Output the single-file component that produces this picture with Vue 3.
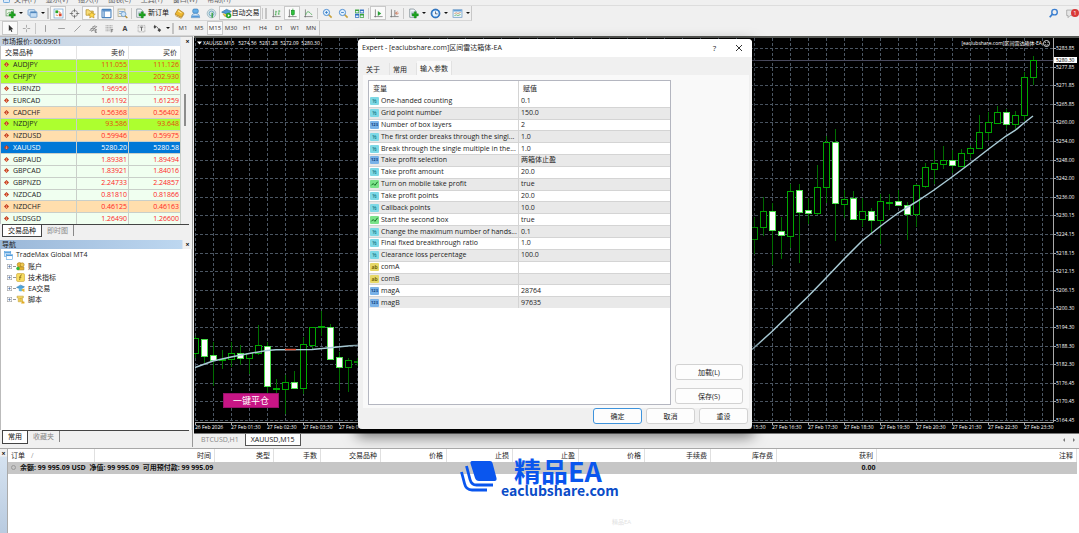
<script setup>
const menus = ['文件(F)', '显示(V)', '插入(I)', '图表(C)', '工具(T)', '窗口(W)', '帮助(H)']

const plus = '<path d="M9 5.5h3v3h3v3h-3v3h-3v-3H6v-3h3z" fill="#1fa51f" stroke="#0b7a14" stroke-width=".6"/>'
const chartBox = '<rect x="1.5" y="2.5" width="11" height="9" fill="#eef6ea" stroke="#5b8f5b"/><path d="M3 9l3-3 2 1 3-3" fill="none" stroke="#4d9a4d"/>'
const page = '<path d="M2.5 1.5h6l3 3v9h-9z" fill="#f4f7fa" stroke="#6d7d86"/><path d="M4.500 6h5M4.500 8h4M4.500 10h4" stroke="#7e98a8"/>'
const glass = '<path d="M9.500 9.500l4.500 4.500" stroke="#c9a13a" stroke-width="2.400"/><circle cx="6.500" cy="6.500" r="4.500" fill="#e3f1fd" stroke="#4b8bd0" stroke-width="1.400"/>'
const axes = '<path d="M3.500 2v11.500M1.500 12.500H14" fill="none" stroke="#666"/>'

const icons = {
  newChart: chartBox + plus,
  windows: '<rect x="1.500" y="2.500" width="10" height="8" rx="1" fill="#dcebf9" stroke="#4f86bd"/><rect x="4.500" y="5.500" width="10" height="8" rx="1" fill="#c3dcf4" stroke="#4f86bd"/><path d="M5 6.500h9" stroke="#4f86bd" stroke-width="2"/>',
  watch: '<rect x="1.500" y="1.500" width="13" height="13" fill="#fff" stroke="#6aa0cf"/><rect x="3.500" y="3.500" width="4" height="4" fill="#28a428"/><rect x="8.500" y="8" width="4" height="4" fill="#d8452c"/><path d="M8 5l3 2M4 10l3 1" stroke="#e08a48" stroke-width="1.500"/>',
  cross: '<circle cx="8" cy="8" r="4.500" fill="none" stroke="#666"/><path d="M8 1v5M8 10v5M1 8h5M10 8h5" stroke="#555"/>',
  favorites: '<path d="M1.500 2.500h4l1.500 2h5v6h-10.500z" fill="#f7dc78" stroke="#b18a22"/><path d="M10 5.500l1.500 3 3.500.4-2.500 2.200.7 3.400-3.200-1.700-3.200 1.700.7-3.400L5 8.900l3.500-.4z" fill="#ffd94a" stroke="#b08312" stroke-width=".8"/>',
  terminal: '<rect x="1.500" y="2" width="13" height="12" rx="1" fill="#fff" stroke="#4b83bd" stroke-width="1.600"/><path d="M2 4h12M4.500 4v9" stroke="#5f94cb" stroke-width="2"/>',
  tester: '<rect x="1.500" y="1.500" width="10" height="11" fill="#f4f0e2" stroke="#a39b7d"/><path d="M3 5h7M3 8h3" stroke="#4c8ed5"/><circle cx="9.500" cy="9" r="3.500" fill="#cfe6fa" stroke="#568fc8"/><path d="M12 11.500l3 3" stroke="#b98f34" stroke-width="2"/>',
  order: page + plus,
  tag: '<path d="M6 1.500l8.500 6-4 6L1.500 9z" fill="#edb72e" stroke="#a87412"/><path d="M2 11l8.500 4 4-6" fill="none" stroke="#b98518"/><path d="M6 4l5 3.500" stroke="#ffe9a3" stroke-width="1.500"/>',
  person: '<rect x="4" y="1.500" width="8" height="6" rx="2" fill="#65aee8" stroke="#397eb9"/><path d="M2 14c0-4 2-6 6-6s6 2 6 6z" fill="#dceaf5" stroke="#4584bf"/><path d="M3 12h10" stroke="#4b94da" stroke-width="2"/>',
  signal: '<circle cx="8" cy="8" r="6.300" fill="#d8e5e8" stroke="#8aabb8"/><circle cx="8" cy="8" r="3.500" fill="none" stroke="#4a93b8"/><path d="M8 7h2v7H8z" fill="#34a13c"/>',
  auto: '<path d="M1 6l7-4 7 3-6 4z" fill="#4d9ad5" stroke="#2a6da5"/><path d="M3 8c1 5 6 6 9 2" fill="#f0c94c" stroke="#a98322"/><circle cx="11" cy="11" r="4" fill="#25a52e"/><path d="M10 9l3 2-3 2z" fill="#fff"/>',
  bars: axes + '<path d="M7 4v7M5.500 9.500h1.500M7 5.500h2M11.500 3v7M10 8.500h1.500M11.500 4.500h2" stroke="#2ba038" fill="none"/>',
  candles: axes + '<path d="M8.500 1v11" stroke="#168f24"/><rect x="6.500" y="3.500" width="4" height="6" fill="#2fc53c" stroke="#168f24"/>',
  line: axes + '<path d="M4 10c2-7 5-5 9 0" stroke="#2ba038" fill="none"/>',
  zoomIn: glass + '<path d="M6.500 4.500v4M4.500 6.500h4" stroke="#2f78c4" stroke-width="1.200"/>',
  zoomOut: glass + '<path d="M4.500 6.500h4" stroke="#2f78c4" stroke-width="1.200"/>',
  tile: '<path d="M1.500 2h6v5.500h-6zM8.500 8.500h6V14h-6z" fill="#3aa33c"/><path d="M8.500 2h6v5.500h-6zM1.500 8.500h6V14h-6z" fill="#2e6fc4"/><path d="M2.500 4.500h4v2h-4zM9.500 4.500h4v2h-4zM2.500 11h4v2h-4zM9.500 11h4v2h-4z" fill="#e8f2fa"/>',
  scroll: axes + '<path d="M7 4.500l5 3.500-5 3.500z" fill="#2ba038"/>',
  shift: axes + '<path d="M8.500 3v9" stroke="#555"/><path d="M14 7.500h-4M12 5l-2.500 2.500L12 10" stroke="#c4532c" fill="none"/>',
  clock: '<circle cx="8" cy="8" r="6.500" fill="#2f7fd3" stroke="#1b5ca6"/><circle cx="8" cy="8" r="4.500" fill="#e9f4fd"/><path d="M8 5v3.500h3" stroke="#235" fill="none"/>',
  template: '<rect x="1.500" y="2.500" width="13" height="11" fill="#eef6fc" stroke="#5b90c2"/><path d="M2 4h12" stroke="#5b9ad5" stroke-width="2"/><path d="M3.500 8l3-1 2 1 4-1.500" stroke="#c5703c" fill="none"/><path d="M3.500 11l3-1 2 1 4-1.500" stroke="#3fa24a" fill="none"/>',
  cursor: '<path d="M5 1.500v11l2.700-2.500 1.800 4 1.800-.8-1.800-3.800H13z" fill="#333"/>',
  plusLine: '<path d="M8 1.500v5M8 9.500v5M1.500 8h5M9.500 8h5" stroke="#777"/>',
  vline: '<path d="M8 2v12" stroke="#777" stroke-width="1.200"/>',
  hline: '<path d="M2 8h12" stroke="#777" stroke-width="1.200"/>',
  diag: '<path d="M2.500 13.500l11-11" stroke="#777" stroke-width="1.200"/>',
  channel: '<path d="M1 12L11 2M4 14L14 4M3 8h8M2 11h8M6 5h8" stroke="#666"/><path d="M11 10v5h3M11 12.500h2.500M11 10h3" stroke="#444" fill="none"/>',
  fibo: '<path d="M1 3h13M1 6h13M1 9h13M1 12h8" stroke="#777" stroke-dasharray="2 .6"/><path d="M11 15v-5h3.500M11 12.500h3" stroke="#444" fill="none"/>',
  textBox: '<rect x="2" y="2.500" width="12" height="11.500" fill="none" stroke="#777" stroke-dasharray="1.500 1"/><path d="M5 5.500h6M8 5.500v6.500" stroke="#555" stroke-width="1.500"/>',
  arrows: '<path d="M3 1.500l3 4-3 3-2-3z" fill="#444"/><path d="M6 4l5 6" stroke="#555" stroke-width="1.500"/><path d="M11 7.500l3.500 3-3 3.500-3.500-3z" fill="#444"/>',
}

const mainBar = [
  { icon: 'newChart', label: '新图表' }, { drop: 1 }, { icon: 'windows', label: '图表配置' }, { drop: 1 }, { handle: 1 },
  { icon: 'watch', label: '市场报价', on: 1 }, { icon: 'cross', label: '数据窗口' }, { icon: 'favorites', label: '导航', on: 1 },
  { icon: 'terminal', label: '终端', on: 1 }, { icon: 'tester', label: '策略测试' }, { sep: 1 },
  { icon: 'order', label: '新订单', text: '新订单' }, { icon: 'tag', label: 'MetaEditor' }, { icon: 'person', label: '社区' },
  { icon: 'signal', label: '信号' }, { icon: 'auto', label: '自动交易', text: '自动交易', on: 1 }, { sep: 1 }, { handle: 1 },
  { icon: 'bars', label: '柱状图' }, { icon: 'candles', label: '阴阳烛', on: 1 }, { icon: 'line', label: '折线图' }, { sep: 1 },
  { icon: 'zoomIn', label: '放大' }, { icon: 'zoomOut', label: '缩小' }, { icon: 'tile', label: '平铺窗口' }, { sep: 1 },
  { icon: 'scroll', label: '自动滚动', on: 1 }, { icon: 'shift', label: '图表平移' }, { sep: 1 },
  { icon: 'order', label: '技术指标' }, { drop: 1 }, { icon: 'clock', label: '时间周期' }, { drop: 1 }, { icon: 'template', label: '模板' }, { drop: 1 },
]
const drawBar = [
  { icon: 'cursor', label: '光标', on: 1 }, { icon: 'plusLine', label: '十字准线' }, { sep: 1 }, { icon: 'vline', label: '垂直线' },
  { icon: 'hline', label: '水平线' }, { icon: 'diag', label: '趋势线' }, { icon: 'channel', label: '等距通道' }, { icon: 'fibo', label: '斐波那契' },
  { letter: 'A' }, { icon: 'textBox', label: '文字标签' }, { icon: 'arrows', label: '箭头' }, { drop: 1 }, { handle: 1 },
  ...['M1', 'M5', 'M15', 'M30', 'H1', 'H4', 'D1', 'W1', 'MN'].map(p => ({ period: p, on: p === 'M15' })),
]

const quotes = [
  ['AUDJPY', '111.055', '111.126', 'lime'], ['CHFJPY', '202.828', '202.930', 'lime'],
  ['EURNZD', '1.96956', '1.97054', ''], ['EURCAD', '1.61192', '1.61259', ''],
  ['CADCHF', '0.56368', '0.56402', 'peach'], ['NZDJPY', '93.586', '93.648', 'lime'],
  ['NZDUSD', '0.59946', '0.59975', 'peach'], ['XAUUSD', '5280.20', '5280.58', 'picked'],
  ['GBPAUD', '1.89381', '1.89494', ''], ['GBPCAD', '1.83921', '1.84016', ''],
  ['GBPNZD', '2.24733', '2.24857', ''], ['NZDCAD', '0.81810', '0.81866', ''],
  ['NZDCHF', '0.46125', '0.46163', 'peach'], ['USDSGD', '1.26490', '1.26600', ''],
]

const tree = [
  { name: '账户', svg: '<circle cx="6" cy="5" r="4" fill="#e8b934" stroke="#a57a12"/><circle cx="11" cy="5" r="3.500" fill="#f0cb55" stroke="#a57a12"/><path d="M3 14V9h11v5z" fill="#e5b32e" stroke="#a57a12"/><circle cx="3.500" cy="11.500" r="3" fill="#2fb53a"/>' },
  { name: '技术指标', svg: '<rect x="1" y="1" width="14" height="14" rx="2" fill="#f7dd63" stroke="#c29a25"/><path d="M10.500 3.500c-3-.5-3 2-4 9M5.500 7.500h4" stroke="#7a5c10" fill="none" stroke-width="1.300"/>' },
  { name: 'EA交易', svg: '<path d="M1 6l7-4 7 3-6 4z" fill="#4da3da" stroke="#2a78ad"/><path d="M5 8v4c3 2 6 1 8-1l-3-4" fill="#5db5e3"/><path d="M9 10l6-2v6l-3-1z" fill="#e8b830"/>' },
  { name: '脚本', svg: '<path d="M2 2h11v3h-2l1 7h-8V5H2z" fill="#f6d961" stroke="#bb962a"/><path d="M6 6h4M6 9h4" stroke="#b58d22"/><path d="M9 15l2-4 4 1v3z" fill="#e2aa22"/>' },
]

const params = [
  ['d', 'One-handed counting', '0.1'], ['d', 'Grid point number', '150.0'], ['i', 'Number of box layers', '2'],
  ['d', 'The first order breaks through the singl...', '1.0'], ['d', 'Break through the single multiple in the...', '1.0'],
  ['i', 'Take profit selection', '两箱体止盈'], ['d', 'Take profit amount', '20.0'], ['b', 'Turn on mobile take profit', 'true'],
  ['d', 'Take profit points', '20.0'], ['d', 'Callback points', '10.0'], ['b', 'Start the second box', 'true'],
  ['d', 'Change the maximum number of hands...', '0.1'], ['d', 'Final fixed breakthrough ratio', '1.0'],
  ['d', 'Clearance loss percentage', '100.0'], ['s', 'comA', ''], ['s', 'comB', ''], ['i', 'magA', '28764'], ['i', 'magB', '97635'],
]
const badge = { d: '½', i: '123', b: '', s: 'ab' }

const prices = ['5283.85', '5277.85', '5271.85', '5265.85', '5260.00', '5254.00', '5248.00', '5242.00', '5236.00', '5230.15', '5224.15',
  '5218.15', '5212.15', '5206.15', '5200.30', '5194.30', '5188.30', '5182.30', '5176.45', '5170.45', '5164.45']
  .map((t, i) => ({ t, y: Math.round(48 + 18.6 * i) }))
const grid = Array.from({ length: 48 }, (_, i) => Math.round(195 + 18.02 * i))
const times = Array.from({ length: 24 }, (_, n) => ({
  x: Math.round(195 + 36.04 * n),
  t: n ? `27 Feb ${String(n).padStart(2, '0')}:30` : '26 Feb 2026',
}))

// [slot, high, bodyTop, bodyBottom, low, falling]
const candles = [
  [0, 336, 338, 353, 358, 0], [1, 339, 339, 356, 363, 1], [2, 342, 355, 360, 386, 1], [3, 350, 359, 359, 369, 0],
  [4, 342, 353, 359, 367, 0], [5, 345, 353, 358, 365, 1], [6, 353, 353, 358, 374, 0], [7, 325, 345, 353, 355, 0],
  [8, 342, 346, 386, 394, 1], [9, 379, 388, 388, 394, 0], [10, 375, 382, 389, 414, 0], [11, 371, 382, 388, 388, 1],
  [12, 337, 344, 388, 394, 0], [13, 327, 327, 345, 350, 0], [14, 311, 326, 326, 336, 0], [15, 324, 327, 359, 360, 1],
  [16, 352, 357, 367, 390, 1], [17, 358, 360, 367, 392, 0], [18, 358, 361, 361, 366, 0],
  [62, 217, 227, 239, 254, 0], [63, 197, 211, 227, 236, 0], [64, 203, 211, 230, 265, 1], [65, 217, 231, 235, 259, 1],
  [66, 184, 191, 236, 248, 0], [67, 184, 190, 212, 263, 1], [68, 198, 210, 213, 224, 1], [69, 165, 187, 213, 215, 0],
  [70, 136, 142, 187, 203, 0], [71, 129, 142, 203, 241, 1], [72, 190, 199, 204, 218, 0], [73, 191, 198, 219, 219, 1],
  [74, 198, 211, 219, 227, 0], [75, 208, 211, 220, 233, 1], [76, 194, 201, 220, 244, 0], [77, 194, 202, 202, 210, 0],
  [78, 190, 201, 205, 205, 1], [79, 202, 205, 214, 240, 1], [80, 184, 185, 214, 227, 0], [81, 163, 167, 186, 188, 0],
  [82, 150, 163, 169, 184, 0], [83, 146, 160, 164, 169, 0], [84, 150, 160, 165, 173, 1], [85, 149, 153, 166, 167, 0],
  [86, 146, 148, 153, 158, 0], [87, 115, 132, 148, 149, 0], [88, 112, 122, 132, 140, 0], [89, 106, 112, 123, 123, 0],
  [90, 109, 112, 124, 129, 1], [91, 111, 115, 124, 129, 0], [92, 72, 77, 115, 121, 0], [93, 56, 60, 77, 85, 0],
].map(([k, hi, top, bot, lo, down]) => ({ x: Math.round(195 + 9.01 * k), hi, top, h: Math.max(bot - top, 1), lo, down }))

const orderCols = [
  ['订单', 'c1'], ['时间', 'c2'], ['类型', 'c3'], ['手数', 'c4'], ['交易品种', 'c5'], ['价格', 'c6'], ['止损', 'c6'], ['止盈', 'c6'],
  ['价格', 'c6'], ['手续费', 'c6'], ['库存费', 'c6'], ['获利', 'c7'], ['注释', 'c8'],
]
</script>

<template>
  <div class="app">
    <nav class="menu">
      <svg class="app-icon" viewBox="0 0 16 16"><rect x="1" y="1" width="14" height="14" rx="2" fill="#dbeafa" stroke="#5c9bd8" stroke-width="2" /></svg>
      <a v-for="m in menus" :key="m" href="#">{{ m }}</a>
    </nav>

    <div class="bars">
      <div class="bar-left">
        <div v-for="(bar, b) in [mainBar, drawBar]" :key="b" class="toolbar" :class="{ low: b === 1 }">
          <template v-for="(t, i) in bar" :key="i">
            <i v-if="t.drop" class="drop"></i>
            <i v-else-if="t.handle" class="handle"></i>
            <i v-else-if="t.sep" class="sep"></i>
            <button v-else class="tool" :class="{ on: t.on, wide: t.text }" :aria-label="t.label">
              <svg v-if="t.icon" viewBox="0 0 16 16" v-html="icons[t.icon]"></svg>
              <span v-if="t.text">{{ t.text }}</span>
              <b v-if="t.letter">{{ t.letter }}</b>
              <small v-if="t.period">{{ t.period }}</small>
            </button>
          </template>
        </div>
      </div>
      <div class="bar-right">
        <button class="tool" aria-label="搜索"><svg viewBox="0 0 16 16"><circle cx="9.500" cy="6" r="4" fill="none" stroke="#3b7fd0" stroke-width="2" /><path d="M6.500 9l-4 4.500" stroke="#3b7fd0" stroke-width="2.500" /></svg></button>
        <button class="tool note" aria-label="通知"><svg viewBox="0 0 16 16"><path d="M1 3h12v8H6l-3 3v-3H1z" fill="#e6e6e6" stroke="#999" /></svg><em>1</em></button>
      </div>
    </div>

    <main class="work">
      <aside class="side">
        <section class="watch">
          <h2 class="cap">市场报价: 06:09:01<button aria-label="关闭">×</button></h2>
          <div class="quote-box">
            <table class="quotes">
              <thead><tr><th>交易品种</th><th>卖价</th><th>买价</th></tr></thead>
              <tbody>
                <tr v-for="q in quotes" :key="q[0]" :class="q[3]">
                  <td><svg viewBox="0 0 8 8"><path d="M4 0l4 4-4 4-4-4z" fill="#c23a1c" /><path d="M4 2v4M2.500 4.500L4 6l1.500-1.500" stroke="#ffb48c" fill="none" /></svg>{{ q[0] }}</td>
                  <td>{{ q[1] }}</td><td>{{ q[2] }}</td>
                </tr>
              </tbody>
            </table>
            <i class="thumb"></i>
          </div>
          <div class="tabs"><button class="cur">交易品种</button><button>即时图</button></div>
        </section>
        <section class="navi">
          <h2 class="cap blue">导航<button aria-label="关闭">×</button></h2>
          <div class="tree">
            <p class="root"><svg viewBox="0 0 16 16"><rect x="1" y="1" width="11" height="9" fill="#d9ecfb" stroke="#4c9adb" /><path d="M1 3h11" stroke="#4c9adb" stroke-width="2" /><rect x="4" y="6" width="11" height="9" fill="#fff" stroke="#4c9adb" /><path d="M4 8h11" stroke="#4c9adb" stroke-width="2" /></svg>TradeMax Global MT4</p>
            <p v-for="n in tree" :key="n.name">
              <svg class="exp" viewBox="0 0 9 9"><rect x=".5" y=".5" width="8" height="8" fill="#fff" stroke="#999" /><path d="M2 4.500h5M4.500 2v5" stroke="#3b5f9b" /></svg><i></i><svg viewBox="0 0 16 16" v-html="n.svg"></svg>{{ n.name }}
            </p>
          </div>
          <div class="tabs"><button class="cur">常用</button><button>收藏夹</button></div>
        </section>
      </aside>

      <div class="stage">
        <svg class="chart" viewBox="194 36 885 397">
          <rect x="194" y="36" width="885" height="397" fill="#000" />
          <rect x="194" y="36" width="885" height="2" fill="#555753" />
          <g stroke="#4b5663" stroke-dasharray="3 2">
            <path v-for="p in prices" :key="p.t" :d="`M195 ${p.y + .5}H1053`" />
            <path v-for="x in grid" :key="x" :d="`M${x + .5} 38V422`" />
          </g>
          <path d="M195 60.500H1053" stroke="#4a4a5e" />
          <g v-for="c in candles" :key="c.x">
            <path :d="`M${c.x + .5} ${c.hi}V${c.lo}`" stroke="#006e00" />
            <rect :x="c.x - 2.500" :y="c.top + .5" width="6" :height="c.h" :fill="c.down ? '#fff' : '#000'" :stroke="c.down ? '#4be04b' : '#00a800'" />
          </g>
          <g fill="none" stroke="#a9cbd6" stroke-width="1.500">
            <path d="M195 367.500L213 361 231 357 249 353.500 267 350.500 276 349.700 312 349.500 330 347.700 350 345.700 360 345.300" />
            <path d="M752 349.500L772 331.500 790 314 808 296.500 825 279 844 259 862 241 880 226.500 898 213 916 202 934 190 952 177 970 163.500 988 149.500 1006 136 1015 130.500 1024 123 1033 116" />
            <path d="M285 349.500H296" stroke="#e0553a" />
          </g>
          <path d="M195 422.500H1053.500M1053.500 38V422" fill="none" stroke="#aaa" />
          <g class="ctext">
            <g v-for="p in prices" :key="p.t"><path :d="`M1053 ${p.y + .5}h3`" stroke="#aaa" /><text x="1056" :y="p.y + 2">{{ p.t }}</text></g>
            <rect x="1054" y="57" width="23" height="6" fill="#fff" />
            <text x="1056" y="62" class="dark">5280.30</text>
            <g v-for="t in times" :key="t.x"><path :d="`M${t.x + .5} 422v3`" stroke="#aaa" /><text :x="t.x" y="429">{{ t.t }}</text></g>
            <path d="M197 41.500h5l-2.500 3z" fill="#fff" />
            <text x="203" y="45">XAUUSD.M15&#160;&#160; 5274.56&#160; 5281.28&#160; 5272.09&#160; 5280.30</text>
            <text x="1042" y="45" text-anchor="end">[eaclubshare.com]区间雷达箱体-EA</text>
            <circle cx="1046.500" cy="43.500" r="3" fill="none" stroke="#ddd" /><path d="M1045 44.500q1.500 1.500 3 0M1045 42.500h1M1047.500 42.500h1" stroke="#ddd" fill="none" stroke-width=".7" />
          </g>
        </svg>
        <button class="close-all">一键平仓</button>
        <div class="chart-tabs">
          <button>BTCUSD,H1</button><button class="cur">XAUUSD,M15</button>
          <span></span><i class="tri left"></i><i class="tri"></i>
        </div>

        <section class="dialog" role="dialog" aria-label="Expert">
          <header>
            <h1>Expert - [eaclubshare.com]区间雷达箱体-EA</h1>
            <button aria-label="帮助">?</button>
            <button aria-label="关闭"><svg viewBox="0 0 8 8"><path d="M1 1l6 6M7 1L1 7" stroke="#333" fill="none" /></svg></button>
          </header>
          <div class="dtabs"><button>关于</button><button>常用</button><button class="cur">输入参数</button></div>
          <div class="pane">
            <div class="grid-box">
              <table class="params">
                <thead><tr><th>变量</th><th>赋值</th></tr></thead>
                <tbody>
                  <tr v-for="p in params" :key="p[1]">
                    <td><span class="kind" :class="p[0]">{{ badge[p[0]] }}<svg v-if="p[0] === 'b'" viewBox="0 0 9 9"><path d="M1 6l2-2 2 2 3-4" stroke="#075f17" fill="none" /></svg></span>{{ p[1] }}</td>
                    <td>{{ p[2] }}</td>
                  </tr>
                </tbody>
              </table>
            </div>
            <div class="file-btns"><button class="btn">加载(L)</button><button class="btn">保存(S)</button></div>
          </div>
          <footer><button class="btn main">确定</button><button class="btn">取消</button><button class="btn">重设</button></footer>
        </section>
      </div>
    </main>

    <section class="term">
      <div class="strip"><button aria-label="关闭">×</button></div>
      <table class="orders">
        <thead><tr><th v-for="(c, i) in orderCols" :key="i" :class="c[1]">{{ c[0] }}<span v-if="i === 0">∕</span></th></tr></thead>
        <tbody>
          <tr><td colspan="11"><i class="ring"></i>余额: 99 995.09 USD&#160; 净值: 99 995.09&#160; 可用预付款: 99 995.09</td><td>0.00</td><td></td></tr>
        </tbody>
      </table>
      <div class="brand">
        <svg viewBox="0 0 37 31">
          <path d="M12 0h18q2 0 2.500 2l4 15q.5 3-2 3H19q-3 0-4-3L10.500 2.500Q10 0 12 0z" fill="#0a56ee" />
          <path d="M6.500 5L10 18.500q1.500 5.500 6.500 5.500H33" fill="none" stroke="#0a56ee" stroke-width="2.800" />
          <path d="M1.500 11L4.500 22.500q1.500 6.500 7.500 6.500h15" fill="none" stroke="#0a56ee" stroke-width="2.800" />
        </svg>
        <div><strong>精品EA</strong><span>eaclubshare.com</span></div>
      </div>
      <small class="faint">精品EA</small>
    </section>
  </div>
</template>

<style>
html, body { margin: 0; background: #f0f0f0; }
</style>

<style scoped>
.app {
  min-height: 100vh; display: flex; flex-direction: column; overflow: hidden;
  font: 7px/10px "Open Sans", "Noto Sans CJK SC", sans-serif; color: #1c1c1c; background: #f0f0f0;
}
button { font: inherit; color: inherit; background: none; border: 0; padding: 0; margin: 0; }
h1, h2, p { margin: 0; font: inherit; }
table { border-collapse: collapse; table-layout: fixed; }
th, td { padding: 0; font-weight: inherit; text-align: left; white-space: nowrap; }
svg { display: block; flex: none; }

.menu { height: 5px; display: flex; gap: 10px; overflow: hidden; padding-left: 3px; line-height: 5px; }
.menu a { color: #666; text-decoration: none; margin-top: -4px; height: 8px; line-height: 8px; }
.app-icon { width: 7px; height: 7px; margin: -4px -6px 0 0; }

.bars { display: flex; justify-content: space-between; align-items: flex-start; border-top: 1px solid #ddd; height: 30px; }
.toolbar { display: flex; align-items: center; height: 15px; border-right: 1px solid #c8c8c8; border-bottom: 1px solid #d6d6d6; width: max-content; padding-left: 2px; box-sizing: border-box; }
.tool { width: 16px; height: 14px; display: flex; align-items: center; justify-content: center; gap: 2px; box-sizing: border-box; }
.tool svg { width: 11px; height: 11px; }
.low .tool svg { width: 9px; height: 9px; }
.tool.on { background: #fafafa; border: 1px solid #c9c9c9; }
.tool.wide { width: 38px; color: #111; }
.tool.wide.on { width: 42px; gap: 0; }
.tool b, .tool small { font: 6px "Noto Sans", sans-serif; color: #444; }
.tool b { font-weight: 700; font-size: 7px; }
.drop { border: 2px solid transparent; border-top-color: #111; border-bottom: 0; margin: 0 1px; }
.handle { height: 11px; margin: 0 1px; border: 1px solid #c4c4c4; border-width: 0 1px; }
.sep { width: 1px; height: 11px; margin: 0 1px; background: #c8c8c8; }
.bar-right { display: flex; }
.note { position: relative; margin-left: 2px; }
.note em { position: absolute; right: 0; top: 3px; width: 8px; height: 8px; border-radius: 4px; background: #d93838; color: #fff; font: 6px/8px "Open Sans", sans-serif; text-align: center; }

.work { display: flex; }
.side { width: 193px; flex: none; display: flex; flex-direction: column; gap: 3px; padding-bottom: 3px; box-sizing: border-box; border-right: 1px solid #999; border-top: 1px solid #bbb; }
.cap { display: flex; justify-content: space-between; line-height: 9px; height: 9px; margin-right: 1px; padding-left: 2px; background: linear-gradient(90deg, #c6d3e2, #d6e2f0 94%, #f0f0f0 95%); }
.cap.blue { background: linear-gradient(90deg, #9ab7d8, #bdd7f0 95%, #f0f0f0 96%); }
.cap button, .strip button { width: 7px; font-weight: 700; line-height: 8px; color: #111; }
.quote-box { display: flex; justify-content: space-between; border-left: 1px solid #c4c4c4; }
.quotes { width: 180px; height: 178px; background: #fff; }
.quotes th { height: 13px; line-height: 8px; border-right: 1px solid #e4e4e4; padding-left: 4px; }
.quotes td { line-height: 8px; border: 1px solid #c9cfc9; border-width: 1px 1px 0 0; background: #f0fff0; color: #ff2525; }
.quotes th:nth-child(n+2), .quotes td:nth-child(n+2) { width: 50px; text-align: right; padding-right: 1px; padding-left: 0; }
.quotes th:nth-child(n+2) { padding-right: 3px; width: 48px; }
.quotes td:first-child { color: #222; padding-left: 3px; }
.quotes td svg { width: 5px; height: 5px; display: inline-block; margin-right: 4px; }
.quotes .lime td { background: #adff2f; }
.quotes .lime td:nth-child(n+2) { color: #e34a10; }
.quotes .peach td { background: #ffdead; }
.quotes .picked td, .quotes .picked td:first-child { background: #0078d7; color: #fff; }
.thumb { width: 2px; height: 32px; margin: 48px 6px 0 0; background: #8c8c8c; }
.tabs { display: flex; height: 13px; border-top: 1px solid #444; margin: 0 3px 0 2px; }
.tabs button { padding: 0 5px; color: #888; border-right: 1px solid #888; height: 11px; line-height: 10px; }
.tabs .cur { background: #fff; color: #111; border: 1px solid #444; border-top: 0; height: 13px; }
.watch .tabs { height: 12px; }
.watch .cur { height: 12px; }
.navi { flex: 1; display: flex; flex-direction: column; }
.tree { flex: 1; background: #fff; border-left: 1px solid #bbb; border-right: 1px solid #ddd; padding: 0 0 0 3px; }
.tree p { height: 11px; display: flex; align-items: center; gap: 3px; padding-left: 3px; }
.tree p svg { width: 9px; height: 9px; }
.tree .root { padding: 0; height: 12px; }
.tree .exp { width: 5px; height: 5px; }
.tree p i { width: 2px; border-top: 1px dotted #999; margin: 0 -2px; }

.stage { flex: 1; min-width: 0; position: relative; padding-left: 1px; }
.chart { width: 100%; height: auto; }
.ctext { font-family: "Open Sans", "Noto Sans CJK SC", sans-serif; font-size: 5px; fill: #fff; }
.dark { fill: #000; }
.close-all { position: absolute; left: 30px; top: 357px; width: 56px; height: 15px; background: #c71585; color: #fff; font-size: 9px; line-height: 13px; border: 1px solid #96106a; }
.chart-tabs { display: flex; height: 14px; align-items: flex-start; border-top: 1px solid #777; box-sizing: border-box; padding-left: 1px; }
.chart-tabs button { padding: 0 6px; line-height: 11px; color: #888; }
.chart-tabs .cur { background: #fff; color: #111; border: 1px solid #555; border-top: 0; padding: 0 5px; }
.chart-tabs span { flex: 1; }
.tri { border: 2px solid transparent; border-left-color: #777; border-right: 0; margin: 4px 4px 0; }
.tri.left { border-left: 0; border-right: 2px solid #777; }

.dialog { position: absolute; left: 165px; top: 3px; width: 394px; background: #f0f0f0; border-radius: 4px; box-shadow: 0 6px 14px 2px rgba(0, 0, 0, .5); overflow: hidden; }
.dialog header { height: 18px; background: #fff; display: flex; align-items: center; padding: 0 8px 0 4px; gap: 16px; }
.dialog h1 { flex: 1; }
.dialog header button { width: 9px; font-size: 8px; }
.dialog header svg { width: 8px; height: 8px; }
.dtabs { display: flex; height: 18px; align-items: flex-end; padding-left: 5px; }
.dtabs button { height: 12px; line-height: 11px; width: 27px; padding-right: 6px; border-right: 1px solid #e2e2e2; }
.dtabs .cur { background: #f9f9f9; height: 14px; width: 35px; padding: 0; }
.pane { display: flex; gap: 4px; margin: 0 3px 0 5px; padding: 5px 6px 3px 5px; background: #f9f9f9; }
.grid-box { width: 301px; height: 323px; background: #fff; border: 1px solid #b4b6c0; }
.params { width: 100%; height: 227px; }
.params th { height: 15px; line-height: 8px; padding-left: 4px; }
.params td { line-height: 8px; border-top: 1px solid #d4d4d4; }
.params tr:first-child td { border-top: 0; }
.params th:first-child, .params td:first-child { width: 149px; border-right: 1px solid #d4d4d4; }
.params th:first-child { width: 145px; }
.params td:nth-child(2) { padding-left: 2px; }
.params tbody tr:nth-child(even) { background: #e9e9e9; }
.kind { display: inline-block; vertical-align: top; width: 9px; height: 8px; margin: 0 2px 0 1px; border-radius: 1px; font: bold 5px/8px "Open Sans", sans-serif; text-align: center; background: #7ed9e6; color: #14737f; }
.kind.i { background: #79b2e8; color: #0c3a7c; font-size: 4px; }
.kind.b { background: #7be38a; }
.kind.s { background: #e6d868; color: #71640b; }
.kind svg { width: 9px; height: 8px; }
.file-btns { flex: 1; display: flex; flex-direction: column; justify-content: flex-end; gap: 8px; padding-bottom: 1px; }
.btn { height: 16px; background: #fdfdfd; border: 1px solid #d2d2d2; border-radius: 3px; box-sizing: border-box; line-height: 13px; }
.dialog footer { display: flex; justify-content: flex-end; gap: 4px; padding: 0 4px 5px; }
.dialog footer .btn { width: 49px; }
.dialog footer .main { border-color: #3e93dc; }

.term { flex: 1; display: flex; position: relative; background: #fff; border-top: 1px solid #a8a8a8; margin-top: 1px; }
.strip { width: 7px; flex: none; background: linear-gradient(#f0f0f0 7px, #d5e2f0 8px, #b9cbe0); border-right: 1px solid #aaa; }
.orders { flex: 1; align-self: flex-start; width: 100%; margin-right: 2px; }
.orders th { height: 13px; text-align: right; padding-right: 3px; border-right: 1px solid #e0e0e0; }
.orders .c1 { width: 80px; text-align: left; padding-left: 3px; }
.orders .c1 span { color: #999; margin-left: 6px; }
.orders .c2 { width: 116px; }
.orders .c3 { width: 55px; }
.orders .c4 { width: 43px; }
.orders .c5 { width: 56px; }
.orders .c6 { width: 62px; padding-right: 3px; }
.orders .c7 { width: 96px; }
.orders td { height: 12px; background: #c6c6c6; font-weight: 700; color: #111; }
.orders td:nth-child(2) { text-align: right; padding-right: 1px; }
.ring { display: inline-block; width: 3px; height: 3px; border: 1px solid #999; border-radius: 3px; margin: 0 4px 0 3px; }
.brand { position: absolute; left: 460px; top: 8px; display: flex; gap: 4px; color: #0a56ee; align-items: flex-start; }
.brand svg { width: 37px; height: 31px; margin-top: 4px; }
.brand strong { display: block; margin-left: 13px; font: 700 27px/27px "Noto Sans CJK SC", sans-serif; }
.brand span { display: block; font: 700 14px/12px "Noto Sans CJK SC", sans-serif; color: #0a4cc8; }
.faint { position: absolute; left: 612px; bottom: 6px; font-size: 6px; color: #e2e2e2; }
</style>
